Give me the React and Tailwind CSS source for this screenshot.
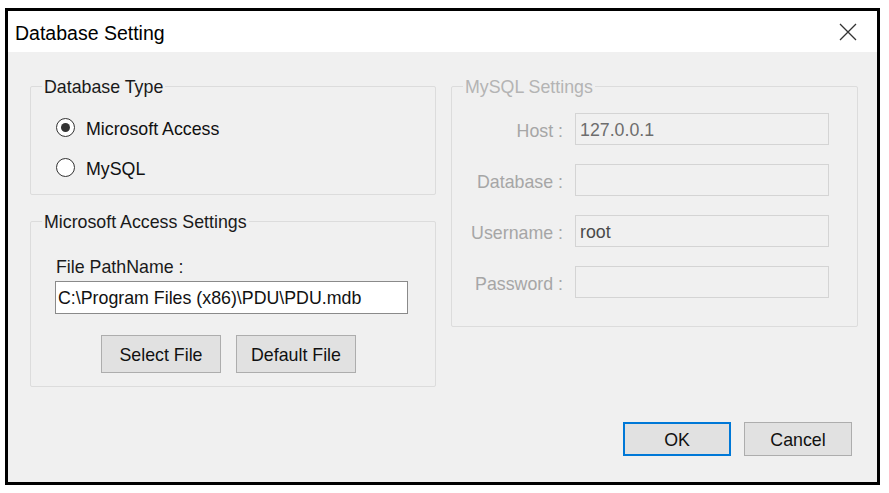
import React from "react";

function Radio({ checked, label }) {
  return (
    <div className="flex items-center h-[24px]">
      <span className="w-[19px] h-[19px] rounded-full border-[1.5px] border-[#333333] bg-white flex items-center justify-center">
        {checked && <span className="w-[9px] h-[9px] rounded-full bg-[#333333]" />}
      </span>
      <span className="ml-[11px] pt-[3px] text-[#111]">{label}</span>
    </div>
  );
}

function Btn({ children, primary, w }) {
  return (
    <div
      className={
        "flex items-center justify-center pt-[2px] bg-[#e1e1e1] text-[#111] " +
        (primary ? "border-2 border-[#0078d7] " : "border border-[#adadad] ") +
        w
      }
    >
      {children}
    </div>
  );
}

function Field({ label, value, dark }) {
  return (
    <div className="flex items-center h-[32px]">
      <div className="w-[113px] pt-[3px] text-right text-[#a6a6a6] pr-[2px]">{label}</div>
      <div
        className={
          "ml-[10px] w-[254px] h-[32px] border border-[#d4d4d4] bg-[#f0f0f0] flex items-center pl-[4px] pt-[1px] " +
          (dark ? "text-[#4a4a4a]" : "text-[#6d6d6d]")
        }
      >
        {value}
      </div>
    </div>
  );
}

export default function App() {
  return (
    <div
      className="w-[889px] h-[493px] bg-white pt-[8px] pl-[5px] text-[17.8px] leading-[20px]"
      style={{ fontFamily: '"Liberation Sans", Arial, sans-serif' }}
    >
      <div className="w-[875px] h-[477px] border-[3px] border-black flex flex-col bg-[#f0f0f0]">
        <div className="h-[41px] bg-white flex items-center justify-between pl-[7px] pr-[20px]">
          <span className="text-[19.5px] pt-[3px] text-black">Database Setting</span>
          <svg width="18" height="18" viewBox="0 0 18 18" className="mt-[1px]">
            <path d="M1 1 L17 17 M17 1 L1 17" stroke="#333" strokeWidth="1.3" fill="none" />
          </svg>
        </div>
        <div className="flex-1 flex flex-col">
          <div className="flex pl-[22px] pt-[24px] gap-[15px]">
            <div className="flex flex-col w-[406px]">
              <fieldset className="border border-[#dcdcdc] h-[119px] rounded-[2px]">
                <legend className="ml-[11px] px-[2px] pt-[1px] text-[#1a1a1a]">Database Type</legend>
                <div className="pl-[25px] pt-[18px] flex flex-col gap-[16px]">
                  <Radio checked label="Microsoft Access" />
                  <Radio label="MySQL" />
                </div>
              </fieldset>
              <fieldset className="mt-[16px] border border-[#dcdcdc] h-[176px] rounded-[2px]">
                <legend className="ml-[11px] px-[2px] pt-[1px] text-[#1a1a1a]">Microsoft Access Settings</legend>
                <div className="pl-[24px] pt-[23px] flex flex-col">
                  <div className="pl-[1px] pt-[2px] text-[#1a1a1a]">File PathName :</div>
                  <div className="mt-[4px] w-[353px] h-[33px] bg-white border border-[#8a8a8a] flex items-center pl-[2px] pt-[1px] text-[#111]">
                    C:\Program Files (x86)\PDU\PDU.mdb
                  </div>
                  <div className="mt-[21px] ml-[46px] flex gap-[15px]">
                    <Btn w="w-[120px] h-[38px]">Select File</Btn>
                    <Btn w="w-[120px] h-[38px]">Default File</Btn>
                  </div>
                </div>
              </fieldset>
            </div>
            <fieldset className="w-[407px] h-[251px] border border-[#dcdcdc] rounded-[2px]">
              <legend className="ml-[11px] px-[2px] pt-[1px] text-[#b4b4b4]">MySQL Settings</legend>
              <div className="pt-[16px] flex flex-col gap-[19px]">
                <Field label="Host :" value="127.0.0.1" />
                <Field label="Database :" value="" />
                <Field label="Username :" value="root" dark />
                <Field label="Password :" value="" />
              </div>
            </fieldset>
          </div>
          <div className="flex-1" />
          <div className="flex justify-end gap-[13px] pr-[25px] pb-[26px]">
            <Btn primary w="w-[108px] h-[34px]">OK</Btn>
            <Btn w="w-[108px] h-[34px]">Cancel</Btn>
          </div>
        </div>
      </div>
    </div>
  );
}
